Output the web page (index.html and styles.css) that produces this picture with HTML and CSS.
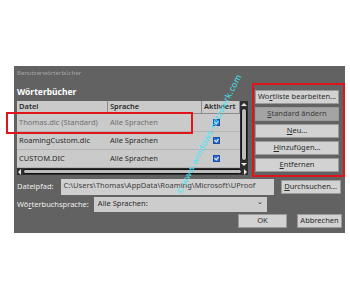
FILE: index.html
```html
<!DOCTYPE html>
<html lang="de">
<head>
    <meta charset="UTF-8">
    <title>Benutzerwörterbücher</title>
    <link rel="stylesheet" href="styles.css">
</head>
<body>
    <div class="dialog">
        <div class="title">Benutzerwörterbücher</div>

        <div class="main">
            <div class="dict-area">
                <div class="section-label">Wörterbücher</div>
                <div class="table">
                    <div class="table-body">
                        <div class="grid">
                            <div class="row head">
                                <div class="cell c-file">Datei</div>
                                <div class="cell c-lang">Sprache</div>
                                <div class="cell c-on">Aktiviert</div>
                            </div>
                            <div class="row default">
                                <div class="cell c-file">Thomas.dic (Standard)</div>
                                <div class="cell c-lang">Alle Sprachen</div>
                                <div class="cell c-on"><span class="check"></span></div>
                                <span class="mark-row"></span>
                            </div>
                            <div class="row">
                                <div class="cell c-file">RoamingCustom.dic</div>
                                <div class="cell c-lang">Alle Sprachen</div>
                                <div class="cell c-on"><span class="check"></span></div>
                            </div>
                            <div class="row">
                                <div class="cell c-file">CUSTOM.DIC</div>
                                <div class="cell c-lang">Alle Sprachen</div>
                                <div class="cell c-on"><span class="check"></span></div>
                            </div>
                        </div>
                        <div class="vscroll">
                            <span class="arrow up"></span>
                            <span class="thumb"></span>
                            <span class="arrow down"></span>
                        </div>
                    </div>
                    <div class="hscroll">
                        <span class="arrow left"></span>
                        <span class="thumb"></span>
                        <span class="arrow right"></span>
                    </div>
                </div>
            </div>

            <div class="actions">
                <button>Wo<u>r</u>tliste bearbeiten...</button>
                <button class="disabled"><u>S</u>tandard ändern</button>
                <button><u>N</u>eu...</button>
                <button><u>H</u>inzufügen...</button>
                <button><u>E</u>ntfernen</button>
            </div>
        </div>

        <div class="field-row">
            <span class="label">Dateipfad:</span>
            <div class="path">C:\Users\Thomas\AppData\Roaming\Microsoft\UProof</div>
            <button class="browse"><u>D</u>urchsuchen...</button>
        </div>

        <div class="field-row">
            <span class="label">Wö<u>r</u>terbuchsprache:</span>
            <div class="select">Alle Sprachen:<span class="caret">⌄</span></div>
        </div>

        <div class="footer">
            <button class="ok">OK</button>
            <button class="cancel">Abbrechen</button>
        </div>

        <span class="watermark">© www.windows-netzwerk.com</span>
    </div>
</body>
</html>
```

FILE: styles.css
```css
:root {
    --dialog-bg: #626262;
    --panel-bg: #cacaca;
    --button-bg: #d2d2d2;
    --text-dark: #2b2b2b;
    --text-light: #eeeeee;
    --mark: #e0141b;
}

* {
    margin: 0;
    padding: 0;
    box-sizing: border-box;
}

body {
    background-color: #ffffff;
    font-family: 'Noto Sans', 'Open Sans', sans-serif;
    font-size: 7.5px;
    line-height: 1.3;
}

.dialog {
    position: relative;
    width: 331px;
    height: 167px;
    margin: 66px 0 0 14px;
    padding: 0 3px;
    background-color: var(--dialog-bg);
    color: var(--text-light);
}

.title {
    height: 17px;
    padding-top: 4px;
    font-size: 6px;
    color: #a8a8a8;
    filter: blur(0.4px);
}

.main {
    display: flex;
    gap: 4px;
}

.dict-area {
    width: 231px;
}

.section-label {
    height: 18px;
    padding-top: 3px;
    font-weight: 700;
    font-size: 8.5px;
    color: #ffffff;
}

.table {
    background-color: var(--panel-bg);
    color: var(--text-dark);
}

.table-body {
    display: flex;
}

.grid {
    width: 223px;
}

.row {
    position: relative;
    display: flex;
    height: 18px;
    align-items: center;
    border-bottom: 1px solid #b4b4b4;
}

.row.head {
    height: 13px;
    border-bottom: 1px solid #8c8c8c;
}

.row.head .cell {
    border-right: 1px solid #8c8c8c;
    height: 100%;
    display: flex;
    align-items: center;
    font-weight: 600;
}

.row.default {
    color: #6f6f6f;
}

.cell {
    padding-left: 2px;
    white-space: nowrap;
}

.c-file {
    width: 91px;
}

.c-lang {
    width: 94px;
}

.c-on {
    width: 38px;
    display: flex;
}

.check {
    position: relative;
    width: 7px;
    height: 7px;
    margin-left: 9px;
    background-color: #2d6fd8;
    border: 1px solid #1d4f9e;
}

.check::after {
    content: "";
    position: absolute;
    left: 1px;
    top: 0;
    width: 2px;
    height: 3px;
    border-right: 1px solid #ffffff;
    border-bottom: 1px solid #ffffff;
    transform: rotate(40deg);
}

.mark-row {
    position: absolute;
    left: -11px;
    top: -2px;
    width: 187px;
    height: 22px;
    border: 2px solid var(--mark);
}

.vscroll {
    display: flex;
    flex-direction: column;
    align-items: center;
    width: 8px;
    padding: 2px 0;
    background-color: #2f2f2f;
}

.vscroll .thumb {
    flex: 1;
    width: 6px;
    margin: 2px 0;
    background-color: #bdbdbd;
    border: 1px solid #111111;
    border-radius: 3px;
}

.arrow {
    width: 0;
    height: 0;
    border: 3px solid transparent;
}

.arrow.up {
    border-bottom-color: #e8e8e8;
    border-top-width: 0;
}

.arrow.down {
    border-top-color: #e8e8e8;
    border-bottom-width: 0;
}

.hscroll {
    display: flex;
    align-items: center;
    height: 7px;
    padding: 0 1px;
    background-color: #2f2f2f;
}

.hscroll .thumb {
    flex: 1;
    height: 5px;
    margin: 0 2px;
    background-color: #bdbdbd;
    border: 1px solid #111111;
    border-radius: 3px;
}

.arrow.left {
    border-right-color: #e8e8e8;
    border-left-width: 0;
}

.arrow.right {
    border-left-color: #e8e8e8;
    border-right-width: 0;
}

.actions {
    display: flex;
    flex-direction: column;
    gap: 3px;
    width: 96px;
    height: 94px;
    padding: 5px 4px 0 1px;
    border: 2px solid var(--mark);
}

button {
    height: 14px;
    padding: 0 2px;
    background-color: var(--button-bg);
    color: var(--text-dark);
    border: 1px solid #9a9a9a;
    font-family: inherit;
    font-size: 7.5px;
    line-height: 1;
    white-space: nowrap;
}

button.disabled {
    background-color: #a4a4a4;
    color: #3c3c3c;
}

.field-row {
    display: flex;
    align-items: center;
    margin-top: 1px;
    height: 17px;
}

.label {
    white-space: nowrap;
}

.path {
    width: 213px;
    height: 16px;
    margin-left: 7px;
    padding: 2px 3px 0;
    background-color: #cfcfcf;
    color: #3e3e3e;
    white-space: nowrap;
    overflow: hidden;
}

.browse {
    width: 60px;
    height: 14px;
    margin-left: 7px;
}

.select {
    display: flex;
    justify-content: space-between;
    width: 173px;
    height: 15px;
    margin-left: 5px;
    padding: 2px 4px 0;
    background-color: #cccccc;
    color: var(--text-dark);
}

.caret {
    font-size: 7px;
    margin-top: -2px;
}

.footer {
    display: flex;
    justify-content: flex-end;
    gap: 10px;
    margin-top: 1px;
}

.ok {
    width: 49px;
}

.cancel {
    width: 45px;
}

.watermark {
    position: absolute;
    left: 110px;
    top: 64px;
    width: 170px;
    text-align: center;
    font-size: 8.5px;
    line-height: 1;
    color: #3fe6f5;
    transform: rotate(-63deg);
    letter-spacing: 0.3px;
}
```
